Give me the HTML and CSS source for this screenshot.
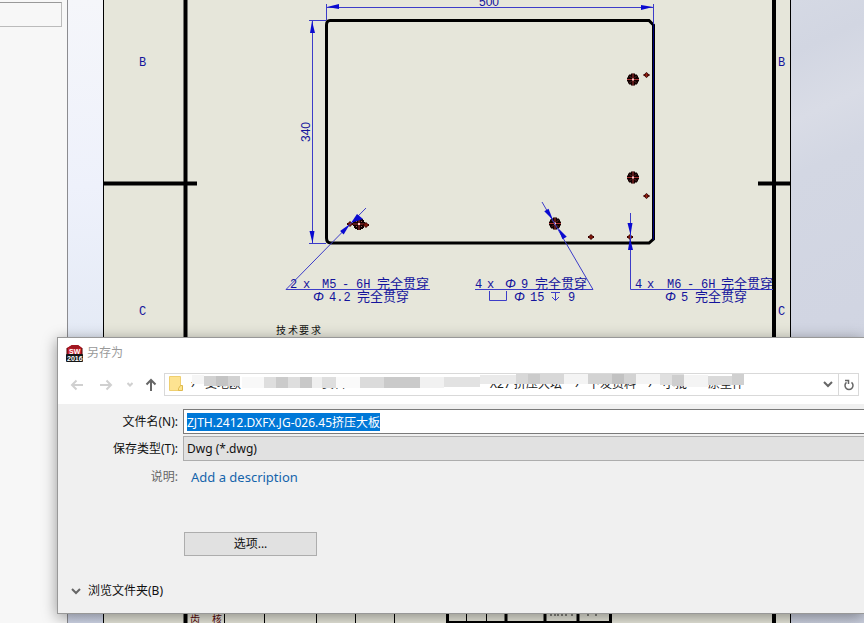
FILE: index.html
```html
<!DOCTYPE html>
<html lang="zh-CN">
<head>
<meta charset="utf-8">
<title>另存为</title>
<link rel="stylesheet" href="styles.css">
</head>
<body>
<div class="app">
  <aside class="panel"><div class="panel-box"></div></aside>
  <main class="workspace">
    <svg class="drawing" viewBox="68 0 796 623" preserveAspectRatio="xMinYMin slice">
      <defs>
        <linearGradient id="edge" x1="0" y1="0" x2="0" y2="1">
          <stop offset="0" stop-color="#f5f6fa"/><stop offset=".3" stop-color="#eef1fb"/><stop offset=".55" stop-color="#e4eaf5"/><stop offset="1" stop-color="#d2d8ea"/>
        </linearGradient>
        <linearGradient id="back" x1="0" y1="0" x2=".3" y2="1">
          <stop offset="0" stop-color="#d5d9e4"/><stop offset=".08" stop-color="#d2d6e2"/><stop offset=".18" stop-color="#d9dce6"/><stop offset=".26" stop-color="#d3d7e3"/><stop offset=".5" stop-color="#d1d5e2"/><stop offset="1" stop-color="#cbd0df"/>
        </linearGradient>
        <g id="hole">
          <path d="M-2-6h4v1h2v1h1v2h1v4h-1v2h-1v1h-2v1h-4v-1h-2v-1h-1v-2h-1v-4h1v-2h1v-1h2z" fill="#100"/>
          <path d="M-6 0H6M0-6V6" stroke="#a33" stroke-width="1"/>
          <path d="M-3-3l1 1M3-3l-1 1M-3 3l1-1M3 3l-1-1" stroke="#a55" stroke-width="1"/>
          <rect x="-1" y="-1" width="2" height="2" fill="#fcc"/>
        </g>
        <g id="tap">
          <path d="M0-3l2 2h1v2H2L0 3l-2-2h-1v-2h1z" fill="#300"/>
          <path d="M-2 0H2M0-2V2" stroke="#921" stroke-width="1"/>
        </g>
        <path id="arrow" d="M0 0L-2 12H3z" fill="#0a0ad0"/>
      </defs>
      <rect x="68" width="36" height="623" fill="url(#edge)"/>
      <rect x="791" width="400" height="623" fill="url(#back)"/>
      <rect x="104" width="687" height="623" fill="#e6e6da"/>
      <g class="ink">
        <path d="M103.500 0V623M790.500 0V623" stroke-width="1"/>
        <path d="M185.500 0V623M774 0V623M104 183.500H197M758 183.500H791" stroke-width="4"/>
        <path d="M330 20.500H649L653.500 25V239L649 243H331Q326.500 243 326.500 238V25Q326.500 20.500 330 20.500Z" stroke-width="3"/>
        <path d="M224.500 612V623M264.500 612V623M316.500 612V623M355.500 612V623M394.500 612V623M466.500 612V623M486.500 612V623" stroke-width="1"/>
        <path d="M447.500 612V622.500H610.500V612M506 612V622M545 612V622M578 612V622" stroke-width="3"/>
      </g>
      <path d="M653.500 24V240" stroke="#00007a" stroke-width="1"/>
      <use href="#hole" x="633" y="79.500"/><use href="#hole" x="633" y="177.500"/>
      <use href="#hole" x="555" y="223.500"/><use href="#hole" x="359" y="224"/>
      <use href="#tap" x="646.500" y="75"/><use href="#tap" x="646.500" y="196"/>
      <use href="#tap" x="591" y="237"/><use href="#tap" x="630" y="237"/>
      <use href="#tap" x="366" y="225"/><use href="#tap" x="350" y="224"/>
      <g class="dim">
        <path d="M326.500 4V20M653.500 4V24M327 7.500H653M309 20.500H326M309 243.500H326M312.500 21V243"/>
        <path d="M366 208L286 289.500H430M542 202L593 289.500H475M630.500 213V289.500H773"/>
        <path d="M489.500 291V300.500H506.500V291M551 292.500H560M555.500 293V300M552 297L555.500 300.500L559 297"/>
      </g>
      <use href="#arrow" transform="translate(327 7) rotate(-90)"/>
      <use href="#arrow" transform="translate(653 7) rotate(90)"/>
      <use href="#arrow" x="312" y="21"/>
      <use href="#arrow" transform="translate(312.500 243) rotate(180)"/>
      <use href="#arrow" transform="translate(350 224) rotate(45)"/>
      <path d="M351 223L357 214L363 219Z" fill="#0a0ad0"/>
      <use href="#arrow" transform="translate(553 220) rotate(149)"/>
      <use href="#arrow" transform="translate(558 228) rotate(-31)"/>
      <use href="#arrow" transform="translate(630.500 235) rotate(180)"/>
      <use href="#arrow" x="630" y="238"/>
      <g class="note">
        <text x="139" y="66">B</text><text x="778" y="66">B</text>
        <text x="139" y="315">C</text><text x="778" y="315">C</text>
        <text class="num" x="479" y="6">500</text>
        <text class="num" transform="translate(310 142) rotate(-90)">340</text>
        <text y="288"><tspan x="290">2</tspan><tspan x="303">x</tspan><tspan x="322">M5</tspan><tspan x="342">-</tspan><tspan x="356">6H</tspan><tspan class="han" x="377">完全贯穿</tspan></text>
        <text y="301"><tspan class="dia" x="313">Φ</tspan><tspan x="329">4.2</tspan><tspan class="han" x="357">完全贯穿</tspan></text>
        <text y="288"><tspan x="475">4</tspan><tspan x="487">x</tspan><tspan class="dia" x="505">Φ</tspan><tspan x="521">9</tspan><tspan class="han" x="535">完全贯穿</tspan></text>
        <text y="301"><tspan class="dia" x="514">Φ</tspan><tspan x="530">15</tspan><tspan x="568">9</tspan></text>
        <text y="288"><tspan x="635">4</tspan><tspan x="647">x</tspan><tspan x="667">M6</tspan><tspan x="687">-</tspan><tspan x="701">6H</tspan><tspan class="han" x="721">完全贯穿</tspan></text>
        <text y="301"><tspan class="dia" x="665">Φ</tspan><tspan x="681">5</tspan><tspan class="han" x="695">完全贯穿</tspan></text>
      </g>
      <text class="heading" y="334"><tspan x="276">技</tspan><tspan x="288">术</tspan><tspan x="299">要</tspan><tspan x="311">求</tspan></text>
      <text class="cell" x="190" y="623">齿</text><text class="cell" x="212" y="623">核</text>
      <path d="M551 613v3M555 613v3M558 613v3M562 613v3M566 613v3M572 613v3M588 613v3M596 613v3" stroke="#222"/>
    </svg>
  </main>

  <section class="dialog" role="dialog" aria-labelledby="dialog-title">
    <header class="titlebar">
      <svg class="logo" width="17" height="17" viewBox="0 0 17 17">
        <path d="M1 3L6 0H12L16 3V10H1Z" fill="#c8202b"/><path d="M1 3L6 0H12L16 3L9 4Z" fill="#a01620"/><path d="M1 3V10M16 3V10" stroke="#400"/>
        <rect y="9" width="17" height="8" rx="1" fill="#151515"/>
        <text x="3" y="9" class="logo-mark">SW</text><text x="1" y="16" class="logo-mark">2016</text>
      </svg>
      <h1 id="dialog-title">另存为</h1>
    </header>
    <nav class="navbar">
      <button class="nav back" aria-label="后退"><svg width="14" height="12" viewBox="0 0 14 12"><path d="M13 6H2M6.500 1.500L2 6L6.500 10.500"/></svg></button>
      <button class="nav forward" aria-label="前进"><svg width="14" height="12" viewBox="0 0 14 12"><path d="M1 6H12M7.500 1.500L12 6L7.500 10.500"/></svg></button>
      <button class="nav recent" aria-label="最近位置"><svg width="6" height="5" viewBox="0 0 6 5"><path d="M.5 1L3 3.500L5.500 1"/></svg></button>
      <button class="nav up" aria-label="上移"><svg width="12" height="14" viewBox="0 0 12 14"><path d="M6 13V2M1.500 6.500L6 2L10.500 6.500"/></svg></button>
      <div class="address">
        <svg class="path" width="600" height="21" viewBox="165 374 600 21">
          <path d="M169.500 376.500h11v14h-11z" fill="#fde391" stroke="#efcf6f"/><path d="M180.500 385.500h2v5h-4v-2z" fill="#fce58f" stroke="#dfb94d"/>
          <g class="crumbs">
            <text x="191" y="388">›</text><text x="205" y="388">变地欧</text>
            <text x="322" y="388">资料</text>
            <text x="490" y="388">X27 挤压大坛</text><text x="575" y="388">›</text>
            <text x="588" y="388">下发资料</text><text x="648" y="388">›</text>
            <text x="663" y="388">小批</text><text x="708" y="388">原型件</text>
          </g>
          <rect x="198" y="374" width="548" height="10" fill="#fff"/>
          <rect x="192" y="375" width="12" height="9" fill="#f6f6f6"/>
          <rect x="204" y="376" width="36" height="10" fill="#d2d2d2"/><rect x="216" y="376" width="12" height="10" fill="#c4c4c4"/>
          <rect x="242" y="377" width="22" height="11" fill="#f8f8f8"/>
          <rect x="264" y="377" width="72" height="11" fill="#dedede"/><rect x="276" y="377" width="12" height="11" fill="#cbcbcb"/><rect x="300" y="377" width="12" height="11" fill="#c8c8c8"/><rect x="312" y="377" width="10" height="11" fill="#efefef"/>
          <rect x="336" y="377" width="24" height="11" fill="#fafafa"/>
          <rect x="360" y="377" width="60" height="11" fill="#dbdbdb"/><rect x="384" y="377" width="36" height="11" fill="#cacaca"/>
          <rect x="420" y="377" width="24" height="11" fill="#f1f1f1"/><rect x="444" y="377" width="36" height="10" fill="#e2e2e2"/><rect x="480" y="375" width="36" height="9" fill="#eaeaea"/>
          <rect x="516" y="374" width="48" height="10" fill="#d8d8d8"/><rect x="528" y="374" width="12" height="10" fill="#cbcbcb"/>
          <rect x="564" y="374" width="24" height="10" fill="#f4f4f4"/><rect x="588" y="374" width="48" height="10" fill="#d3d3d3"/><rect x="612" y="374" width="12" height="10" fill="#c2c2c2"/>
          <rect x="636" y="374" width="24" height="10" fill="#f4f4f4"/><rect x="660" y="374" width="24" height="11" fill="#e0e0e0"/><rect x="672" y="375" width="12" height="11" fill="#cecece"/>
          <rect x="684" y="375" width="24" height="12" fill="#f4f4f4"/><rect x="708" y="376" width="36" height="9" fill="#dadada"/><rect x="732" y="374" width="12" height="11" fill="#d0d0d0"/>
        </svg>
        <button class="tool drop" aria-label="历史记录"><svg width="10" height="7" viewBox="0 0 10 7"><path d="M1 1L5 5L9 1"/></svg></button>
        <button class="tool refresh" aria-label="刷新"><svg width="12" height="12" viewBox="0 0 12 12"><path d="M8.500 3.300A4 4 0 1 1 3.500 3.300M2 1.500H5.500V5"/></svg></button>
      </div>
    </nav>
    <form class="form">
      <label for="filename">文件名(N):</label>
      <input id="filename" class="field" type="text" value="ZJTH.2412.DXFX.JG-026.45挤压大板" spellcheck="false" autocomplete="off">
      <label for="filetype">保存类型(T):</label>
      <select id="filetype" class="field"><option>Dwg (*.dwg)</option></select>
      <span class="muted">说明:</span>
      <a class="describe" href="#">Add a description</a>
      <button class="options" type="button">选项...</button>
    </form>
    <footer class="footer">
      <button class="browse"><svg width="10" height="7" viewBox="0 0 10 7"><path d="M1 1L5 5L9 1"/></svg>浏览文件夹(B)</button>
    </footer>
  </section>
</div>
<script src="script.js"></script>
</body>
</html>
```
FILE: styles.css
```css
* { box-sizing: border-box; }
body {
  margin: 0;
  font: 12px/16px "Noto Sans", "Noto Sans CJK SC", sans-serif;
  color: #111;
}
button, input, select { font: inherit; color: inherit; margin: 0; }
button { padding: 0; border: 0; background: none; }
svg { display: block; }

.app {
  position: relative;
  display: grid;
  grid-template-columns: 68px 1fr;
  height: 100vh;
  overflow: hidden;
}
.panel { background: #f7f7f7; border-right: 1px solid #8c8c90; padding: 2px 2px 0 0; }
.panel-box { height: 25px; margin-right: 3px; border: 1px solid #bbb; border-left: 0; border-top-color: #999; }
.workspace { min-width: 0; overflow: hidden; background: #d2d6e4; }
.drawing { width: 100%; height: 100%; }

.ink { fill: none; stroke: #000; }
.dim { fill: none; stroke: #3c3cc8; stroke-width: 1; }
.note { fill: #14149c; font: 12px "Liberation Mono", monospace; }
.note .han { font: 13px "Noto Sans CJK SC", sans-serif; }
.note .num { font: 12px "Liberation Sans", sans-serif; }
.note .dia { font: italic 13px "Liberation Sans", sans-serif; }
.heading { fill: #111; font: 10px "Noto Sans CJK SC", sans-serif; }
.cell { fill: #5a0808; font: 10px "Noto Sans CJK SC", sans-serif; }

.dialog {
  position: absolute;
  top: 337px;
  left: 57px;
  right: 0;
  border: 1px solid #989898;
  border-right: 0;
  background: #f0f0f0;
  box-shadow: 0 3px 14px rgba(0, 0, 0, .4);
}
.titlebar { display: flex; align-items: center; gap: 4px; height: 30px; padding-left: 8px; background: #fff; }
.titlebar h1 { margin: 0; font-size: 12px; font-weight: 400; color: #999; }
.logo-mark { fill: #fff; font: bold 7px "Liberation Sans", sans-serif; }

.navbar { display: flex; align-items: center; height: 36px; padding: 0 5px 3px 12px; background: #fff; }
.nav svg, .tool svg, .browse svg { fill: none; stroke: #666; stroke-width: 2; }
.nav.back svg, .nav.forward svg, .nav.recent svg { stroke: #d0d0d0; }
.tool.refresh svg { stroke-width: 1.500; }
.forward { margin-left: 15px; }
.recent { margin-left: 14px; }
.up { margin: 0 7px 0 12px; }
.address { display: flex; flex: 1; min-width: 0; height: 23px; border: 1px solid #d9d9d9; }
.path { flex: 0 1 auto; min-width: 0; }
.crumbs { fill: #222; font: 12px "Noto Sans", "Noto Sans CJK SC", sans-serif; }
.tool { display: grid; place-items: center; width: 20px; }
.drop { margin-left: auto; }
.refresh { border-left: 1px solid #d9d9d9; }

.form {
  display: grid;
  grid-template-columns: 120px 1fr;
  column-gap: 5px;
  row-gap: 2px;
  align-items: center;
  padding-top: 5px;
}
.form label, .muted { text-align: right; }
.muted { color: #666; }
.field { width: 100%; height: 25px; border: 1px solid #7a7a7a; border-right: 0; border-radius: 0; padding: 0 3px; background: #fff; outline: 0; }
.field::selection { background: #0078d7; color: #fff; }
select.field { appearance: none; border-color: #adadad; background: #e1e1e1; }
.describe { padding: 6px 0 6px 8px; font-size: 13px; color: #1464ab; text-decoration: none; }
.options { grid-column: 2; width: 133px; height: 24px; margin: 39px 0 0 1px; border: 1px solid #adadad; background: #e1e1e1; }
.footer { padding: 27px 0 14px 13px; }
.browse { display: flex; align-items: center; gap: 7px; }
```
FILE: script.js
```js
const filename = document.getElementById("filename");
filename.focus();
filename.select();
```
